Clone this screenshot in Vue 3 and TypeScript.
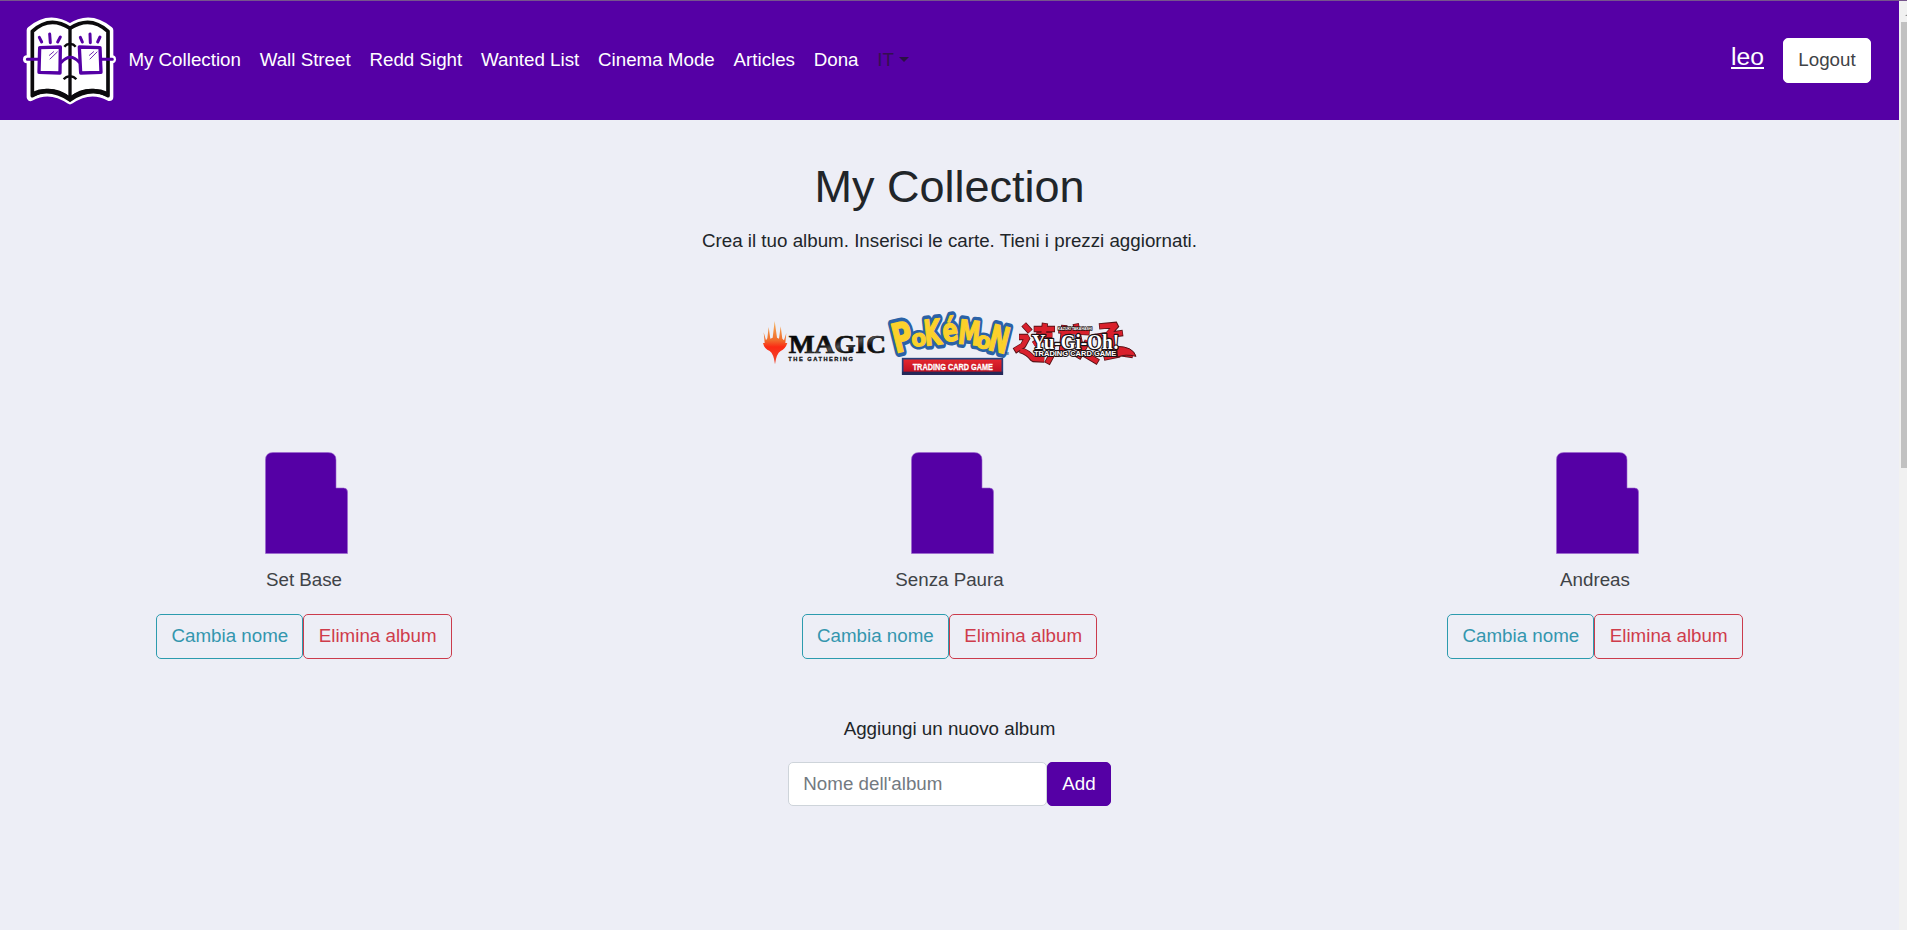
<script setup lang="ts">
interface Album {
  id: number
  name: string
}

interface Glyph {
  char: string
  size: number
  transform: string
}

const links: string[] = [
  'My Collection',
  'Wall Street',
  'Redd Sight',
  'Wanted List',
  'Cinema Mode',
  'Articles',
  'Dona',
]

const albums: Album[] = [
  { id: 1, name: 'Set Base' },
  { id: 2, name: 'Senza Paura' },
  { id: 3, name: 'Andreas' },
]

// Letters of the arched wordmark, each with its own tilt and stretch.
const pokemon: Glyph[] = [
  { char: 'P', size: 80, transform: 'translate(47 145) rotate(-14) scale(1.04 1.5)' },
  { char: 'o', size: 66, transform: 'translate(97 126) rotate(-8) scale(1 1.05)' },
  { char: 'K', size: 73, transform: 'translate(136 122) rotate(-6) scale(.92 1.45)' },
  { char: 'é', size: 68, transform: 'translate(191 111) rotate(-8) scale(1.02 1.38)' },
  { char: 'M', size: 72, transform: 'translate(232 115) rotate(6) scale(.92 1.38)' },
  { char: 'o', size: 65, transform: 'translate(285 126) rotate(10) scale(1 1.05)' },
  { char: 'N', size: 72, transform: 'translate(320 133) rotate(14) scale(.98 1.5)' },
]
</script>

<template>
  <div class="page">
    <div class="content">
      <header class="navbar">
        <svg class="brand" viewBox="60 30 300 300" aria-hidden="true">
          <path
            d="M92 88 Q148 40 210 80 Q270 40 328 88 V288 Q270 256 210 298 Q150 256 92 288 Z"
            fill="#fff" stroke="#fff" stroke-width="24" stroke-linejoin="round"
          />
          <path d="M81 175 H336" stroke="#fff" stroke-width="24" stroke-linecap="round" />
          <path
            d="M97 91 Q150 42 210 82 Q270 42 324 91 V284 Q265 250 210 293 Q152 250 97 284 Z"
            fill="#fff" stroke="#0b0a0c" stroke-width="11" stroke-linejoin="round"
          />
          <path d="M97 280 Q152 255 210 295 Q266 255 324 280" fill="none" stroke="#0b0a0c" stroke-width="14" />
          <path d="M210 82 V293" stroke="#0b0a0c" stroke-width="10" />
          <path d="M193 137 Q200 128 210 129 Q220 128 227 137 M191 235 Q199 225 210 226 Q221 225 229 235" fill="none" stroke="#0b0a0c" stroke-width="7" />
          <g fill="none" stroke="#5500a5" stroke-linecap="round">
            <path d="M82 175 H117 M304 175 H337 M184 184 Q211 153 238 184" stroke-width="9" />
            <path d="M119 140 L181 138 L180 216 L117 214 Z M238 138 L300 140 L303 214 L242 216 Z" stroke-width="10" stroke-linejoin="round" />
            <path d="M118 109 L125 123 M149 99 L151 125 M181 108 L173 123 M241 109 L247 123 M270 99 L271 125 M300 108 L293 123" stroke-width="9" />
            <path d="M148 163 L161 152 M150 174 L172 153 M268 163 L281 152 M270 174 L291 153" stroke-width="2.5" />
          </g>
        </svg>
        <nav class="links">
          <a v-for="link in links" :key="link" class="link">{{ link }}</a>
          <a class="link language">IT<span class="caret"></span></a>
        </nav>
        <div class="account">
          <a class="user">leo</a>
          <button class="btn logout">Logout</button>
        </div>
      </header>

      <main>
        <h1>My Collection</h1>
        <p class="intro">Crea il tuo album. Inserisci le carte. Tieni i prezzi aggiornati.</p>

        <svg class="games" viewBox="0 0 1170 225">
          <defs>
            <linearGradient id="flame" x1="0" y1="0" x2="0" y2="1">
              <stop offset="0" stop-color="#f6b35c" />
              <stop offset=".45" stop-color="#f06a2c" />
              <stop offset=".6" stop-color="#fb2a14" />
              <stop offset="1" stop-color="#ef4a31" />
            </linearGradient>
            <linearGradient id="steel" x1="0" y1="0" x2="1" y2="1">
              <stop offset="0" stop-color="#000" />
              <stop offset=".45" stop-color="#111" />
              <stop offset=".55" stop-color="#555" />
              <stop offset=".7" stop-color="#080808" />
              <stop offset="1" stop-color="#222" />
            </linearGradient>
            <linearGradient id="band" x1="0" y1="0" x2="0" y2="1">
              <stop offset="0" stop-color="#e8292f" />
              <stop offset="1" stop-color="#b80d20" />
            </linearGradient>
          </defs>

          <g>
            <path
              d="M60 178 Q56 146 44 138 Q28 132 24 114 L29 114 L26 82 L33 106 L37 100 L41 66 L46 101 L53 98 L59 48 L66 98 L72 101 L77 64 L82 101 L87 106 L94 84 L91 114 L97 114 Q91 132 77 138 Q64 146 60 178 Z"
              fill="url(#flame)"
            />
            <text x="101" y="143" textLength="292" lengthAdjust="spacingAndGlyphs" class="serif" font-size="73" fill="url(#steel)" stroke="#111" stroke-width="2">MAGIC</text>
            <text x="100" y="167" textLength="194" class="sans" font-size="17" fill="#111" stroke="#111" stroke-width=".8">THE GATHERING</text>
          </g>

          <g transform="translate(375 0)">
            <g class="poke" fill="#2b62a6" stroke="#2b62a6" stroke-width="18">
              <text v-for="(g, i) in pokemon" :key="i" :transform="g.transform" :font-size="g.size">{{ g.char }}</text>
            </g>
            <g class="poke" fill="#fbd12b" stroke="#fbd12b" stroke-width="3">
              <text v-for="(g, i) in pokemon" :key="i" :transform="g.transform" :font-size="g.size">{{ g.char }}</text>
            </g>
            <text x="375" y="149" class="sans" font-size="8" fill="#244e87">TM</text>
            <rect x="68" y="161" width="299" height="46" fill="url(#band)" stroke="#27407c" stroke-width="5" />
            <rect x="66" y="200" width="303" height="10" fill="#252858" />
            <text x="98" y="194" textLength="241" lengthAdjust="spacingAndGlyphs" class="sans" font-size="29" fill="#fff" stroke="#fff" stroke-width=".8">TRADING CARD GAME</text>
          </g>

          <g transform="translate(750 0)">
            <g fill="none" stroke-linecap="butt" stroke-linejoin="bevel">
              <path
                d="M56 58 L76 80 M42 96 L68 96 L54 122 L28 138 M45 135 Q70 142 84 162 L118 164 M86 72 H150 M94 90 H142 M120 54 L114 100 L86 118 M108 94 L148 128 M140 150 L126 176 M160 76 L254 82 M178 60 L170 146 M212 56 L230 142 L280 172 M248 108 L218 160 M282 64 L336 59 L308 90 M270 96 L354 84 M318 90 L330 142 L384 150 M296 158 L344 148"
                stroke="#571217" stroke-width="19"
              />
              <path
                d="M57 59 L75 79 M43 96 L68 96 L54 121 L30 136 M46 135 Q70 142 84 161 L117 163 M88 72 H148 M94 90 H142 M120 56 L114 100 L86 118 M108 94 L148 128 M139 152 L127 174 M162 76 L252 82 M178 62 L170 146 M213 58 L230 142 L278 170 M248 108 L219 158 M284 64 L334 60 L309 88 M272 96 L352 84 M318 90 L330 142 L384 150 M298 158 L342 148"
                stroke="#d9202c" stroke-width="14"
              />
            </g>
            <path d="M334 124 Q384 124 393 154 Q362 146 338 156 Z" fill="#d9202c" stroke="#571217" stroke-width="3" />
            <text x="158" y="74" textLength="104" lengthAdjust="spacingAndGlyphs" class="outlined sans" font-size="13" stroke-width="4">KAZUKI TAKAHASHI</text>
            <text x="80" y="131" textLength="262" lengthAdjust="spacingAndGlyphs" class="outlined serif" font-size="66" stroke-width="8">Yu-Gi-Oh!</text>
            <text x="87" y="153" textLength="247" lengthAdjust="spacingAndGlyphs" class="outlined sans" font-size="20" stroke-width="6">TRADING CARD GAME</text>
          </g>
        </svg>

        <section class="albums">
          <article v-for="album in albums" :key="album.id" class="album">
            <svg class="file" viewBox="0 0 83 102" aria-hidden="true">
              <path
                d="M.5 101.500 V8 Q.5 .5 8 .5 H63 Q71 .5 71 8 V36 H78.500 Q82.500 36 82.500 40 V101.500 Z"
                fill="#5500a5" stroke="#9a63cf" stroke-width=".6"
              />
            </svg>
            <p class="album-name">{{ album.name }}</p>
            <div class="actions">
              <button class="btn rename">Cambia nome</button>
              <button class="btn remove">Elimina album</button>
            </div>
          </article>
        </section>

        <p class="new-title">Aggiungi un nuovo album</p>
        <form class="new-album" @submit.prevent>
          <input type="text" placeholder="Nome dell'album" />
          <button class="btn add">Add</button>
        </form>
      </main>
    </div>
    <div class="scrollbar">
      <span class="arrow"></span>
      <span class="thumb"></span>
    </div>
  </div>
</template>

<style>
html,
body {
  margin: 0;
  overflow: hidden;
  font-size: 18.75px;
}
</style>

<style scoped>
.page {
  display: flex;
  box-sizing: border-box;
  width: 100%;
  height: 930px;
  overflow: hidden;
  border-top: 1px solid #76558c;
  background: #edeef6;
  color: #212529;
  font-family: "Liberation Sans", Arial, sans-serif;
  font-size: 18.75px;
  line-height: 28px;
}

.content {
  flex: 1;
  min-width: 0;
  overflow: hidden;
}

.navbar {
  display: flex;
  align-items: center;
  box-sizing: border-box;
  height: 119px;
  padding: 0 28px 0 20px;
  background: #5500a5;
}

.brand {
  width: 100px;
  height: 100px;
}

.links {
  display: flex;
  margin: -2px 0 0 -1px;
}

.link {
  padding: 0 9.375px;
  color: #fff;
  white-space: nowrap;
}

.language {
  display: flex;
  align-items: center;
  color: #33104f;
}

.caret {
  margin: -1px 0 0 5px;
  border: 5.600px solid transparent;
  border-top-color: #2b1145;
  border-bottom: 0;
}

.account {
  display: flex;
  align-items: center;
  margin-left: auto;
}

.user {
  margin: -8px 19px 0 0;
  color: #fff;
  font-size: 24.700px;
  text-decoration: underline;
  text-decoration-thickness: 2px;
  text-underline-offset: 2px;
}

.btn {
  box-sizing: border-box;
  height: 45px;
  padding: 0 14px 2px;
  border: 1px solid;
  border-radius: 5px;
  background: transparent;
  font: inherit;
  white-space: nowrap;
}

.logout {
  width: 88px;
  border-color: #fff;
  background: #fff;
  color: #3f4347;
}

main {
  text-align: center;
}

h1 {
  margin: 40px 0 0;
  font-size: 45px;
  font-weight: 400;
  line-height: 54px;
}

.intro {
  margin: 13px 0 0;
}

.games {
  display: block;
  width: 390px;
  height: 75px;
  margin: 50px auto 0;
}

.sans {
  font-family: "Liberation Sans", Arial, sans-serif;
  font-weight: 700;
}

.serif {
  font-family: "Liberation Serif", serif;
  font-weight: 700;
}

.poke {
  font-family: "DejaVu Sans", sans-serif;
  font-weight: 700;
  stroke-linejoin: round;
}

.outlined {
  fill: #fff;
  stroke: #1c1113;
  stroke-linejoin: round;
  paint-order: stroke;
}

.albums {
  display: grid;
  grid-template-columns: repeat(3, 1fr);
  margin: 72px -18.750px 0;
}

.album {
  display: flex;
  flex-direction: column;
  align-items: center;
}

.file {
  width: 83px;
  height: 102px;
  margin-left: 5px;
}

.album-name {
  margin: 12px 0 0;
  color: #3f4347;
}

.actions {
  display: flex;
  margin-top: 20px;
}

.actions .btn {
  padding: 0 14.300px 2px;
}

.rename {
  border-color: #2c9bae;
  color: #3496ae;
}

.remove {
  border-color: #cb3b4c;
  color: #cf3c4b;
}

.new-title {
  margin: 56px 0 0;
}

.new-album {
  display: flex;
  justify-content: center;
  margin-top: 19px;
}

.new-album input {
  box-sizing: border-box;
  width: 259px;
  height: 44px;
  padding: 0 14px;
  border: 1px solid #ced4da;
  border-radius: 5px;
  background: #fff;
  color: #495057;
  font: inherit;
}

.new-album input::placeholder {
  color: #737a81;
  opacity: 1;
}

.add {
  height: 44px;
  padding: 0 14px;
  border-color: #5500a5;
  background: #5500a5;
  color: #fff;
}

.scrollbar {
  display: flex;
  flex-direction: column;
  width: 8px;
  overflow: hidden;
  background: #f1f1f1;
}

.arrow {
  width: 0;
  height: 0;
  margin: 12px 0 6px 6px;
  border: 4px solid transparent;
  border-top: 0;
  border-bottom: 3px solid #8b8b8b;
}

.thumb {
  height: 446px;
  margin-left: 2px;
  background: #c1c1c1;
}
</style>
